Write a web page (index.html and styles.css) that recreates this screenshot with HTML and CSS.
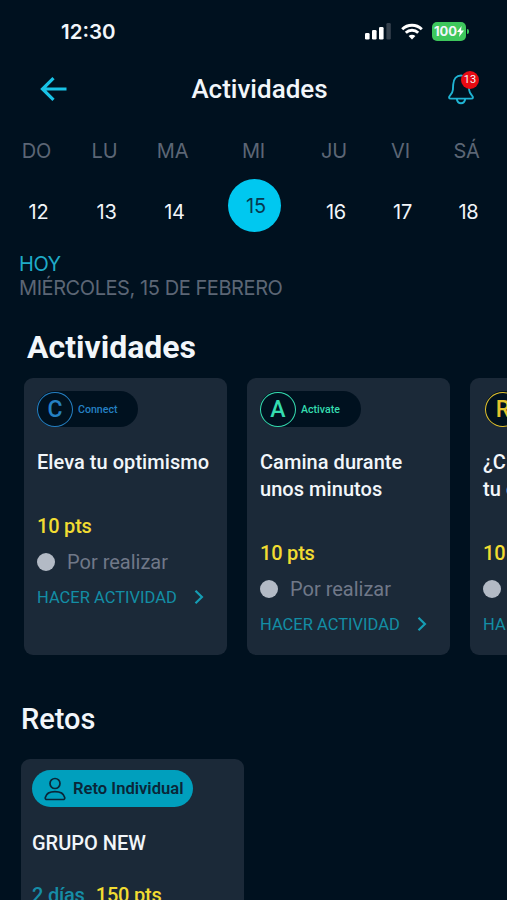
FILE: index.html
```html
<!DOCTYPE html>
<html lang="es">
<head>
    <meta charset="UTF-8">
    <meta name="viewport" content="width=device-width, initial-scale=1.0">
    <title>Actividades</title>
    <link rel="stylesheet" href="styles.css">
</head>
<body>
    <div class="app">
        <div class="status-bar">
            <span class="hora">12:30</span>
            <div class="status-icons">
                <svg class="signal" viewBox="0 0 26 17" width="26" height="17">
                    <rect x="0" y="10" width="4.6" height="6.5" rx="1.3" fill="#fff"/>
                    <rect x="7" y="7" width="4.6" height="9.5" rx="1.3" fill="#fff"/>
                    <rect x="14" y="4" width="4.6" height="12.5" rx="1.3" fill="#fff"/>
                    <rect x="21.4" y="0" width="4.4" height="16.5" rx="1.3" fill="#35414d"/>
                </svg>
                <svg class="wifi" viewBox="0 0 22 17" width="22" height="17">
                    <path d="M1.2 6.2a14 14 0 0 1 19.6 0M4.8 9.8a9 9 0 0 1 12.4 0" fill="none" stroke="#fff" stroke-width="2.9"/>
                    <path d="M11 16.6l-3.4-3.5a4.9 4.9 0 0 1 6.8 0z" fill="#fff"/>
                </svg>
                <div class="bateria">
                    <span>100</span>
                    <svg viewBox="0 0 7 11" width="7" height="11">
                        <path d="M4.6 0L0 6h2.8L2 11l5-6.400H4z" fill="#fff"/>
                    </svg>
                </div>
                <div class="bateria-polo"></div>
            </div>
        </div>

        <div class="header">
            <svg class="volver" viewBox="0 0 28 26" width="28" height="26">
                <path d="M13.500 2.200L2.500 13l11 10.800M2.500 13h24" fill="none" stroke="#19c3e6" stroke-width="3.200"/>
            </svg>
            <h1>Actividades</h1>
            <div class="campana">
                <svg viewBox="0 0 28 32" width="28" height="32">
                    <path d="M14 2.500C9.500 2.500 6.500 6 6.200 11.500l-.3 5.200c-.1 2-1 3.800-2.900 5.900-1.500 1.700-1.300 3 .8 3h20.400c2.100 0 2.300-1.300.8-3-1.900-2.100-2.800-3.900-2.900-5.900l-.3-5.200c-.3-5.500-3.300-9-7.800-9zM9.800 26c.4 2.900 2 4.300 4.200 4.300s3.800-1.400 4.200-4.300" fill="none" stroke="#1fb4d3" stroke-width="1.900" stroke-linejoin="round"/>
                </svg>
                <span class="badge">13</span>
            </div>
        </div>

        <div class="semana">
            <div class="dia"><span class="nombre">DO</span><span class="num">12</span></div>
            <div class="dia"><span class="nombre">LU</span><span class="num">13</span></div>
            <div class="dia"><span class="nombre">MA</span><span class="num">14</span></div>
            <div class="dia"><span class="nombre">MI</span><span class="num hoy">15</span></div>
            <div class="dia"><span class="nombre">JU</span><span class="num">16</span></div>
            <div class="dia"><span class="nombre">VI</span><span class="num">17</span></div>
            <div class="dia"><span class="nombre">SÁ</span><span class="num">18</span></div>
        </div>

        <div class="fecha">
            <p class="fecha-hoy">HOY</p>
            <p>MIÉRCOLES, 15 DE FEBRERO</p>
        </div>

        <h2 class="titulo-actividades">Actividades</h2>
        <div class="actividades">
            <div class="card connect">
                <div class="pill"><span class="letra">C</span><span class="pill-texto">Connect</span></div>
                <h3>Eleva tu optimismo</h3>
                <p class="pts">10 pts</p>
                <div class="estado"><span class="punto"></span>Por realizar</div>
                <div class="accion">
                    <span>HACER ACTIVIDAD</span>
                    <svg viewBox="0 0 10 16" width="10" height="16"><path d="M1.500 1.800L7.900 8l-6.400 6.200" fill="none" stroke="#159db4" stroke-width="2.200"/></svg>
                </div>
            </div>
            <div class="card activate">
                <div class="pill"><span class="letra">A</span><span class="pill-texto">Activate</span></div>
                <h3>Camina durante<br>unos minutos</h3>
                <p class="pts">10 pts</p>
                <div class="estado"><span class="punto"></span>Por realizar</div>
                <div class="accion">
                    <span>HACER ACTIVIDAD</span>
                    <svg viewBox="0 0 10 16" width="10" height="16"><path d="M1.500 1.800L7.900 8l-6.400 6.200" fill="none" stroke="#159db4" stroke-width="2.200"/></svg>
                </div>
            </div>
            <div class="card relax">
                <div class="pill"><span class="letra">R</span></div>
                <h3>¿C<br>tu c</h3>
                <p class="pts">10</p>
                <div class="estado"><span class="punto"></span></div>
                <div class="accion"><span>HA</span></div>
            </div>
        </div>

        <h2 class="titulo-retos">Retos</h2>
        <div class="reto">
            <div class="reto-tipo">
                <svg viewBox="0 0 22 24" width="22" height="24">
                    <circle cx="11" cy="6.500" r="5" fill="none" stroke="#0a2638" stroke-width="1.700"/>
                    <path d="M3 22.500c-1.300 0-2-.8-1.700-2C2.300 16.500 6 14.700 11 14.700s8.700 1.800 9.700 5.800c.3 1.200-.4 2-1.700 2z" fill="none" stroke="#0a2638" stroke-width="1.700"/>
                </svg>
                <span>Reto Individual</span>
            </div>
            <h3>GRUPO NEW</h3>
            <div class="reto-info"><span class="dias">2 días</span><span class="pts">150 pts</span></div>
        </div>
    </div>
</body>
</html>
```
FILE: styles.css
```css
* {
    margin: 0;
    padding: 0;
    box-sizing: border-box;
}

body {
    font-family: Roboto, sans-serif;
    background: #00111f;
    color: #f2f6fa;
}

.app {
    height: 900px;
    overflow: hidden;
}

svg {
    display: block;
    flex-shrink: 0;
}

.status-bar {
    height: 62px;
    padding: 0 38px 0 61px;
    display: flex;
    align-items: center;
    justify-content: space-between;
}

.hora {
    font-family: Inter, sans-serif;
    font-size: 20.5px;
    font-weight: 600;
}

.status-icons {
    display: flex;
    align-items: center;
}

.wifi {
    margin: 0 9px 0 10px;
}

.bateria {
    width: 34px;
    height: 19px;
    border-radius: 5px;
    background: #3ec75c;
    display: flex;
    align-items: center;
    justify-content: center;
    font-family: Inter, sans-serif;
    font-size: 13px;
    font-weight: 700;
}

.bateria-polo {
    width: 2px;
    height: 5px;
    margin-left: 1px;
    border-radius: 0 2px 2px 0;
    background: #3ec75c;
}

.header {
    height: 54px;
    padding: 0 32px 0 40px;
    display: flex;
    align-items: center;
    justify-content: space-between;
}

.header h1 {
    font-size: 26px;
    font-weight: 500;
    padding-left: 4px;
}

.campana {
    position: relative;
}

.badge {
    position: absolute;
    top: -2px;
    right: -4px;
    width: 18px;
    height: 18px;
    border-radius: 50%;
    background: #e80a12;
    font-size: 11px;
    line-height: 18px;
    text-align: center;
}

.semana {
    height: 114px;
    margin-top: 23px;
    padding-left: 3px;
    display: grid;
    grid-template-columns: 68px 68px 68px 94px 67px 66px 66px;
    font-family: Inter, sans-serif;
    font-size: 20px;
    letter-spacing: -0.2px;
}

.dia {
    display: flex;
    flex-direction: column;
    align-items: center;
}

.nombre {
    line-height: 24px;
    margin-bottom: 16px;
    padding-right: 1px;
    color: #5c6675;
}

.num {
    height: 53px;
    line-height: 67px;
    padding-left: 3px;
}

.num.hoy {
    width: 53px;
    padding-left: 4px;
    border-radius: 50%;
    background: #00c8f0;
    color: #063a50;
    line-height: 54px;
    text-align: center;
}

.fecha {
    margin-top: -1px;
    padding-left: 19px;
    font-family: Inter, sans-serif;
    font-size: 20px;
    line-height: 24px;
    letter-spacing: -0.43px;
    color: #5c6675;
}

.fecha-hoy {
    color: #1fabc8;
}

.titulo-actividades {
    margin: 27px 0 11px 27px;
    font-size: 32px;
    font-weight: 700;
    line-height: 40px;
}

.actividades {
    padding-left: 24px;
    display: flex;
    gap: 20px;
}

.card {
    width: 203px;
    height: 277px;
    flex-shrink: 0;
    padding: 13px 13px 0;
    border-radius: 9px;
    background: #1b2938;
}

.pill {
    width: 101px;
    height: 36px;
    margin-bottom: 22px;
    border-radius: 18px;
    background: #00111f;
    display: flex;
    align-items: center;
    gap: 5px;
}

.letra {
    width: 36px;
    height: 35px;
    border: 1.500px solid;
    border-radius: 50%;
    font-size: 23px;
    font-weight: 500;
    line-height: 33px;
    text-align: center;
}

.pill-texto {
    font-size: 10.600px;
    font-weight: 500;
}

.connect .pill {
    color: #2581c4;
}

.activate .pill {
    color: #35ddb0;
}

.relax .pill {
    color: #e3c32e;
    margin-left: 2px;
}

.card h3,
.reto h3 {
    font-size: 20px;
    font-weight: 500;
    line-height: 27px;
}

.card h3 {
    white-space: nowrap;
    letter-spacing: 0.05px;
}

.pts {
    color: #f1dc32;
    font-size: 20px;
    font-weight: 500;
    line-height: 24px;
    letter-spacing: -0.2px;
}

.card .pts {
    margin-top: 38px;
}

.estado {
    height: 24px;
    margin-top: 12px;
    display: flex;
    align-items: center;
    gap: 12px;
    font-size: 20px;
    color: #707888;
}

.punto {
    width: 18px;
    height: 18px;
    border-radius: 50%;
    background: #b3bac5;
}

.accion {
    height: 22px;
    margin-top: 12px;
    display: flex;
    align-items: center;
    gap: 17px;
    font-size: 16.500px;
    white-space: nowrap;
    color: #138ea5;
}

.titulo-retos {
    margin: 46px 0 22px 21px;
    font-size: 29px;
    font-weight: 500;
    line-height: 36px;
}

.reto {
    width: 223px;
    height: 200px;
    margin-left: 21px;
    padding: 11px;
    border-radius: 9px;
    background: #1b2938;
}

.reto-tipo {
    width: 161px;
    height: 37px;
    padding-left: 12px;
    margin-bottom: 23px;
    border-radius: 19px;
    background: #009fbd;
    color: #0a2638;
    display: flex;
    align-items: center;
    gap: 7px;
    font-size: 16.600px;
    font-weight: 600;
    white-space: nowrap;
}

.reto-info {
    margin-top: 26px;
    display: flex;
    gap: 11px;
    font-size: 20px;
    line-height: 24px;
    letter-spacing: -0.2px;
}

.dias {
    color: #168da7;
    font-weight: 500;
}
```
